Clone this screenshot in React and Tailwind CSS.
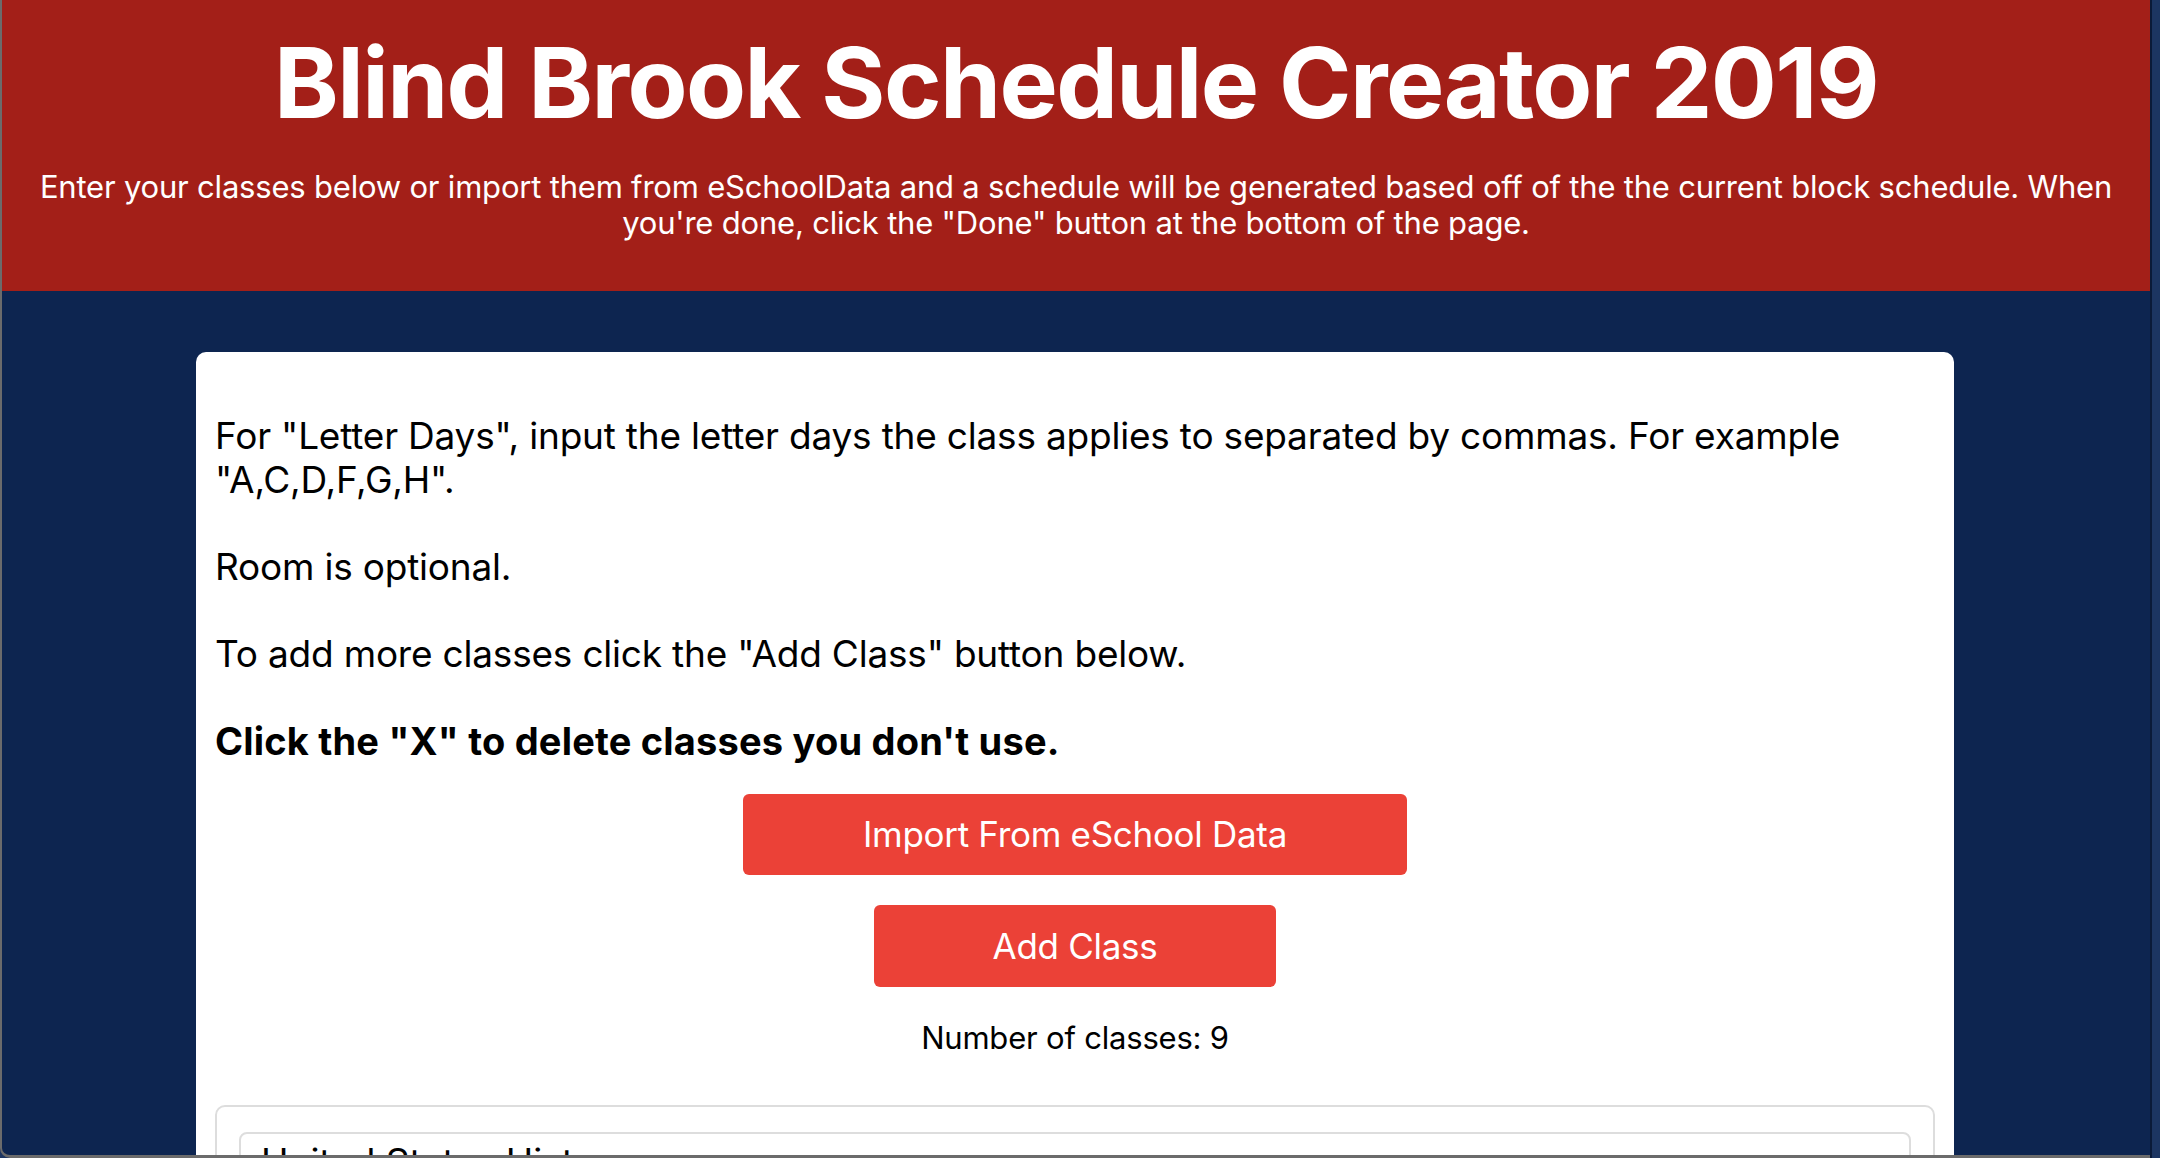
import React from "react";

const paragraphs = [
  'For "Letter Days", input the letter days the class applies to separated by commas. For example "A,C,D,F,G,H".',
  "Room is optional.",
  'To add more classes click the "Add Class" button below.',
];

export default function App() {
  return (
    <div
      className="h-[1158px] overflow-hidden flex bg-[#1c3561]"
      style={{ fontFamily: "Inter, 'Noto Sans', sans-serif" }}
    >
      <div className="flex-1 flex flex-col bg-[#0d2550] border-l-2 border-b-[3px] border-[#6b6b6b] rounded-bl-[10px] overflow-hidden">
        <header className="bg-[#a31f18] h-[291px] shrink-0 flex flex-col items-center text-white">
          <h1 className="mt-[28px] text-[98px] leading-[110px] font-bold tracking-[-1.6px]">
            Blind Brook Schedule Creator 2019
          </h1>
          <p className="mt-[31px] px-[30px] text-center text-[31px] leading-[36px] tracking-[-0.2px]">
            Enter your classes below or import them from eSchoolData and a schedule will be generated based off of the the current block schedule. When you're done, click the "Done" button at the bottom of the page.
          </p>
        </header>

        <main className="flex justify-center pt-[61px] pr-[2px]">
          <div className="w-[1758px] bg-white rounded-[10px] px-[19px] pt-[62px] text-black">
            {paragraphs.map((t, i) => (
              <p key={i} className="text-[37px] leading-[44px] mb-[43px] tracking-[-0.2px]">
                {t}
              </p>
            ))}
            <p className="text-[38px] leading-[44px] font-bold tracking-[0.2px]">
              Click the "X" to delete classes you don't use.
            </p>

            <div className="flex flex-col items-center mt-[31px]">
              <button className="w-[664px] h-[81px] bg-[#eb4137] rounded-[6px] text-white text-[35px] tracking-[-0.3px]">
                Import From eSchool Data
              </button>
              <button className="mt-[30px] w-[402px] h-[82px] bg-[#eb4137] rounded-[6px] text-white text-[35px] tracking-[-0.3px]">
                Add Class
              </button>
              <p className="mt-[31px] text-[31px] leading-[40px] tracking-[-0.2px]">
                Number of classes: 9
              </p>
            </div>

            <div className="mt-[47px] border-2 border-[#dddddd] rounded-[10px] px-[22px] pt-[25px] pb-[20px]">
              <div className="border-2 border-[#dddddd] rounded-[8px] px-[20px] pt-[6px] pb-[14px]">
                <p className="text-[37px] leading-[44px]">United States History</p>
              </div>
            </div>
          </div>
        </main>
      </div>
      <div className="w-[10px] shrink-0 bg-[#1c3561] border-l-2 border-[#0a1a38]" />
    </div>
  );
}
